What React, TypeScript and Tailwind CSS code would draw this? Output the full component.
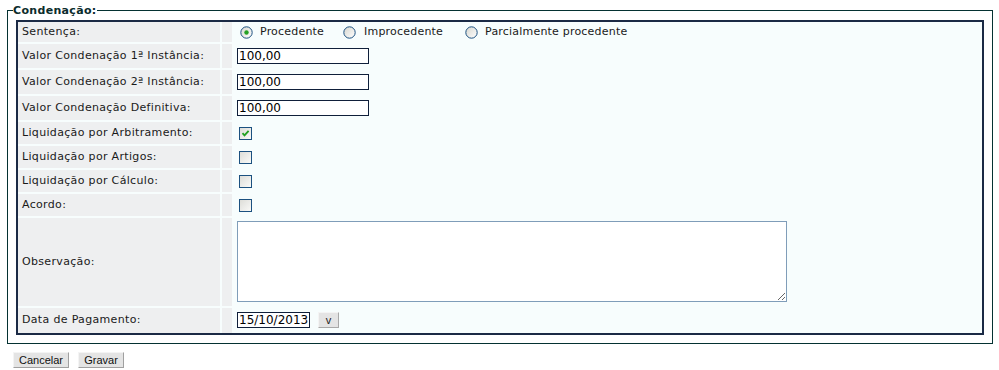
import React from 'react';

const rowLabel =
  'w-[202px] shrink-0 bg-[#eeeff0] pl-[4px] flex items-center text-[11px] text-[#1a1a1a]';
const spacer = 'w-[10px] shrink-0 ml-[2px] bg-[#eeeff0]';

function Radio({ checked }: { checked?: boolean }) {
  return (
    <svg width="13" height="13" viewBox="0 0 13 13" className="shrink-0">
      <defs>
        <linearGradient id={checked ? 'rg1' : 'rg0'} x1="0" y1="0" x2="1" y2="1">
          <stop offset="0" stopColor="#d6d6cf" />
          <stop offset="1" stopColor="#ffffff" />
        </linearGradient>
      </defs>
      <circle cx="6.5" cy="6.5" r="5.7" fill={`url(#${checked ? 'rg1' : 'rg0'})`} stroke="#1c5180" strokeWidth="1" />
      {checked && <circle cx="6.5" cy="6.5" r="2.2" fill="#24a124" />}
    </svg>
  );
}

function Check({ checked }: { checked?: boolean }) {
  return (
    <svg width="13" height="13" viewBox="0 0 13 13" className="shrink-0 ml-[2px]">
      <defs>
        <linearGradient id="cbg" x1="0" y1="0" x2="1" y2="1">
          <stop offset="0" stopColor="#dcdcd7" />
          <stop offset="1" stopColor="#fbfbf9" />
        </linearGradient>
      </defs>
      <rect x="0.5" y="0.5" width="12" height="12" fill="url(#cbg)" stroke="#1c5180" />
      {checked && (
        <path d="M3.5 6.2 L5.5 8.4 L9.6 3.8" fill="none" stroke="#21a121" strokeWidth="1.8" />
      )}
    </svg>
  );
}

function Row({ label, h, children, top }: { label: string; h: string; children?: React.ReactNode; top?: boolean }) {
  return (
    <div className={`flex ${h}`}>
      <div className={rowLabel}>{label}</div>
      <div className={spacer} />
      <div className={`flex-1 pl-[5px] flex ${top ? 'items-start pt-[3px]' : 'items-center'}`}>{children}</div>
    </div>
  );
}

const textInput =
  "h-[16px] border border-[#0f1f3a] bg-white px-[1px] text-[12px] leading-[14px] tracking-normal font-['DejaVu_Sans',sans-serif] text-black outline-none";

export default function App() {
  return (
    <div className="w-[999px] h-[370px] bg-white pt-[4px] tracking-[0.33px] font-['DejaVu_Sans',Verdana,sans-serif]">
      <fieldset className="ml-[7px] w-[986px] border border-[#053232] px-[8px] pt-[3px] pb-[8px]">
        <legend className="ml-[-3px] text-[11px] leading-[13px] font-bold text-[#0b2c2c]">Condenação:</legend>
        <div className="border-2 border-[#1b2a45] bg-[#f7fdfd] flex flex-col gap-[2px]">
          <Row label="Sentença:" h="h-[20px]">
            <div className="flex items-center text-[11px] tracking-[0.2px] text-[#1a1a1a] pt-[1px]">
              <span className="ml-[3px]"><Radio checked /></span>
              <span className="ml-[7px]">Procedente</span>
              <span className="ml-[19px]"><Radio /></span>
              <span className="ml-[8px]">Improcedente</span>
              <span className="ml-[22px]"><Radio /></span>
              <span className="ml-[7px]">Parcialmente procedente</span>
            </div>
          </Row>
          <Row label="Valor Condenação 1ª Instância:" h="h-[24px]">
            <input className={`${textInput} w-[132px]`} defaultValue="100,00" />
          </Row>
          <Row label="Valor Condenação 2ª Instância:" h="h-[24px]">
            <input className={`${textInput} w-[132px]`} defaultValue="100,00" />
          </Row>
          <Row label="Valor Condenação Definitiva:" h="h-[24px]">
            <input className={`${textInput} w-[132px]`} defaultValue="100,00" />
          </Row>
          <Row label="Liquidação por Arbitramento:" h="h-[22px]">
            <Check checked />
          </Row>
          <Row label="Liquidação por Artigos:" h="h-[22px]">
            <Check />
          </Row>
          <Row label="Liquidação por Cálculo:" h="h-[22px]">
            <Check />
          </Row>
          <Row label="Acordo:" h="h-[22px]">
            <Check />
          </Row>
          <Row label="Observação:" h="h-[88px]" top>
            <textarea className="w-[550px] h-[81px] border border-[#7f9db9] bg-white outline-none" />
          </Row>
          <Row label="Data de Pagamento:" h="h-[25px]">
            <input className={`${textInput} w-[73px] -mt-[1px]`} defaultValue="15/10/2013" />
            <button className="ml-[8px] -mt-[1px] w-[21px] h-[16px] bg-[#e4e4e4] border border-[#f4f4f4] border-r-[#a8a8a8] border-b-[#a8a8a8] text-[11px] leading-[12px] tracking-normal text-[#222] font-['Liberation_Sans',Arial,sans-serif]">
              v
            </button>
          </Row>
        </div>
      </fieldset>
      <div className="flex gap-[9px] pl-[13px] mt-[8px] tracking-normal font-['Liberation_Sans',Arial,sans-serif]">
        <button className="w-[56px] h-[16px] bg-[#e4e4e4] border border-[#f4f4f4] border-r-[#a0a0a0] border-b-[#a0a0a0] text-[11px] leading-[12px] text-[#111]">
          Cancelar
        </button>
        <button className="w-[46px] h-[16px] bg-[#e4e4e4] border border-[#f4f4f4] border-r-[#a0a0a0] border-b-[#a0a0a0] text-[11px] leading-[12px] text-[#111]">
          Gravar
        </button>
      </div>
    </div>
  );
}
